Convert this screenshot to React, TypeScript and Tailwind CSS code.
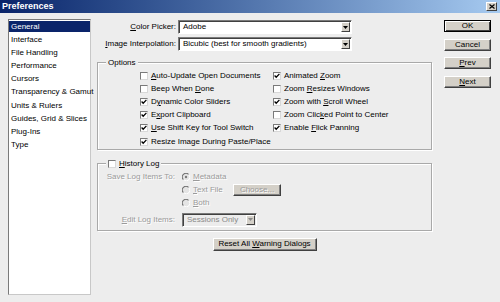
import React from "react";

function U({ children }: { children: React.ReactNode }) {
  return <span className="underline underline-offset-[1px]">{children}</span>;
}

function Check({ on }: { on?: boolean }) {
  return (
    <span className="flex h-[8px] w-[8px] shrink-0 items-center justify-center border border-t-[#7a7a7a] border-l-[#7a7a7a] border-r-[#d8d8d8] border-b-[#d8d8d8] bg-white">
      {on && (
        <svg width="6" height="6" viewBox="0 0 6 6">
          <path d="M0.6 2.5 L2.2 4.2 L5.4 0.9" fill="none" stroke="#000" strokeWidth="1.3" />
        </svg>
      )}
    </span>
  );
}

function Radio({ on }: { on?: boolean }) {
  return (
    <svg width="8" height="8" viewBox="0 0 8 8" className="shrink-0">
      <circle cx="4" cy="4" r="3.4" fill="#e4e4e4" />
      <path d="M1.4 6.6 A3.5 3.5 0 0 1 6.6 1.4" stroke="#6e6e6e" fill="none" strokeWidth="1.1" />
      <path d="M6.8 1.8 A3.5 3.5 0 0 1 1.8 6.8" stroke="#ffffff" fill="none" strokeWidth="1" />
      {on && <circle cx="4" cy="4" r="1.2" fill="#7a7a7a" />}
    </svg>
  );
}

function Arrow({ disabled }: { disabled?: boolean }) {
  return (
    <span className="my-[1px] mr-[1px] ml-auto flex w-[9px] items-center justify-center border border-t-white border-l-white border-r-[#404040] border-b-[#404040] bg-[#d4d0c8]">
      <svg width="5" height="3" viewBox="0 0 5 3">
        <path d="M0 0 H5 L2.5 3 Z" fill={disabled ? "#8a8a8a" : "#000"} />
      </svg>
    </span>
  );
}

function Btn({ children, def, disabled, className }: { children: React.ReactNode; def?: boolean; disabled?: boolean; className: string }) {
  return (
    <div
      className={
        "flex items-center justify-center bg-[#d4d0c8] leading-none " +
        (def
          ? "border border-black shadow-[inset_1px_1px_0_#fff,inset_-1px_-1px_0_#404040] "
          : "border border-t-white border-l-white border-r-[#404040] border-b-[#404040] shadow-[inset_-1px_-1px_0_#808080] ") +
        (disabled ? "text-[#9a9a9a] [text-shadow:1px_1px_0_#fff] " : "text-black ") +
        className
      }
    >
      <span className="whitespace-nowrap">{children}</span>
    </div>
  );
}

const listItems = [
  "General",
  "Interface",
  "File Handling",
  "Performance",
  "Cursors",
  "Transparency & Gamut",
  "Units & Rulers",
  "Guides, Grid & Slices",
  "Plug-Ins",
  "Type",
];

function Opt({ on, children }: { on?: boolean; children: React.ReactNode }) {
  return (
    <div className="flex h-[13.2px] items-center gap-[3px] whitespace-nowrap">
      <Check on={on} />
      <span>{children}</span>
    </div>
  );
}

export default function App() {
  return (
    <div className="h-[302px] w-[500px] overflow-hidden bg-[#ededed] font-['Liberation_Sans',Arial,sans-serif] text-[8px] text-black">
      {/* title bar */}
      <div className="flex h-[13px] items-center bg-gradient-to-r from-[#0a246a] to-[#a6caf0] pr-[3px] pl-[2px]">
        <span className="text-[9px] font-bold text-white">Preferences</span>
        <span className="ml-auto flex h-[9px] w-[11px] items-center justify-center border border-t-white border-l-white border-r-[#404040] border-b-[#404040] bg-[#d4d0c8]">
          <svg width="6" height="5" viewBox="0 0 6 5">
            <path d="M0.5 0.5 L5.5 4.5 M5.5 0.5 L0.5 4.5" stroke="#000" strokeWidth="1.2" />
          </svg>
        </span>
      </div>

      <div className="flex pt-[6px] pl-[8px]">
        {/* category list */}
        <div className="h-[276px] w-[83px] shrink-0 border border-t-[#7a7a7a] border-l-[#7a7a7a] border-r-[#c8c8c8] border-b-[#c8c8c8] bg-white pt-[1px]">
          {listItems.map((it, i) => (
            <div key={it} className="h-[13.2px] whitespace-nowrap">
              <div className={"flex h-[11px] items-center pl-[2px] " + (i === 0 ? "bg-[#0a246a] text-white" : "text-black")}>{it}</div>
            </div>
          ))}
        </div>

        {/* main */}
        <div className="ml-[6px] flex w-[335px] shrink-0 flex-col">
          <div className="mt-[1px] flex h-[14px] items-center">
            <span className="w-[79px] text-right whitespace-nowrap">
              <U>C</U>olor Picker:
            </span>
            <div className="ml-[2px] flex h-[14px] w-[174px] items-stretch border border-t-[#7a7a7a] border-l-[#7a7a7a] border-r-white border-b-white bg-white shadow-[inset_1px_1px_0_#404040]">
              <span className="flex items-center pl-[4px]">Adobe</span>
              <Arrow />
            </div>
          </div>
          <div className="mt-[3px] flex h-[14px] items-center">
            <span className="w-[79px] text-right whitespace-nowrap">
              <U>I</U>mage Interpolation:
            </span>
            <div className="ml-[2px] flex h-[14px] w-[174px] items-stretch border border-t-[#7a7a7a] border-l-[#7a7a7a] border-r-white border-b-white bg-white shadow-[inset_1px_1px_0_#404040]">
              <span className="flex items-center pl-[4px] whitespace-nowrap">Bicubic (best for smooth gradients)</span>
              <Arrow />
            </div>
          </div>

          {/* Options */}
          <fieldset className="mt-[5px] border border-[#a9a9a9] pb-[1px] shadow-[inset_1px_1px_0_#fff,1px_1px_0_#fff]">
            <legend className="ml-[8px] bg-[#ededed] px-[2px] leading-[13px]">Options</legend>
            <div className="flex pl-[42px]">
              <div className="flex w-[133px] flex-col">
                <Opt><U>A</U>uto-Update Open Documents</Opt>
                <Opt>Beep When <U>D</U>one</Opt>
                <Opt on>D<U>y</U>namic Color Sliders</Opt>
                <Opt on>E<U>x</U>port Clipboard</Opt>
                <Opt on><U>U</U>se Shift Key for Tool Switch</Opt>
                <Opt on>Resize Ima<U>g</U>e During Paste/Place</Opt>
              </div>
              <div className="flex flex-col">
                <Opt on>Animated <U>Z</U>oom</Opt>
                <Opt>Zoom <U>R</U>esizes Windows</Opt>
                <Opt on>Zoom with <U>S</U>croll Wheel</Opt>
                <Opt>Zoom Clic<U>k</U>ed Point to Center</Opt>
                <Opt on>Enable <U>F</U>lick Panning</Opt>
              </div>
            </div>
          </fieldset>

          {/* History Log */}
          <fieldset className="mt-[7px] border border-[#a9a9a9] pb-[3px] shadow-[inset_1px_1px_0_#fff,1px_1px_0_#fff]">
            <legend className="ml-[8px] flex h-[13px] items-center gap-[3px] bg-[#ededed] px-[2px]">
              <Check />
              <span><U>H</U>istory Log</span>
            </legend>
            <div className="flex text-[#9a9a9a] [text-shadow:1px_1px_0_#fff]">
              <div className="flex w-[77px] flex-col text-right whitespace-nowrap">
                <div className="h-[13.2px] leading-[13.2px]">Save Log Items To:</div>
                <div className="h-[13.2px]" />
                <div className="h-[13.2px]" />
                <div className="mt-[3px] flex h-[14px] items-center justify-end"><span><U>E</U>dit Log Items:</span></div>
              </div>
              <div className="ml-[7px] flex flex-col">
                <div className="flex h-[13.2px] items-center gap-[3px]">
                  <Radio on />
                  <span><U>M</U>etadata</span>
                </div>
                <div className="flex h-[13.2px] items-center">
                  <div className="flex w-[51px] items-center gap-[3px]">
                    <Radio />
                    <span><U>T</U>ext File</span>
                  </div>
                  <Btn disabled className="h-[12px] w-[48px]">Choose...</Btn>
                </div>
                <div className="flex h-[13.2px] items-center gap-[3px]">
                  <Radio />
                  <span><U>B</U>oth</span>
                </div>
                <div className="mt-[3px] flex h-[14px] w-[75px] items-stretch border border-t-[#7a7a7a] border-l-[#7a7a7a] border-r-white border-b-white bg-[#ececec] shadow-[inset_1px_1px_0_#404040] [text-shadow:none]">
                  <span className="flex items-center pl-[4px] whitespace-nowrap text-[#8a8a8a]">Sessions Only</span>
                  <Arrow disabled />
                </div>
              </div>
            </div>
          </fieldset>

          <div className="mt-[7px] flex justify-center">
            <Btn className="h-[13px] w-[104px]">Reset All <U>W</U>arning Dialogs</Btn>
          </div>
        </div>

        {/* buttons */}
        <div className="ml-[12px] flex w-[47px] shrink-0 flex-col gap-[6.5px] pt-[1px]">
          <Btn def className="h-[12px] w-[47px]">OK</Btn>
          <Btn className="h-[12px] w-[47px]">Cancel</Btn>
          <Btn className="h-[12px] w-[47px]"><U>P</U>rev</Btn>
          <Btn className="h-[12px] w-[47px]"><U>N</U>ext</Btn>
        </div>
      </div>
    </div>
  );
}
